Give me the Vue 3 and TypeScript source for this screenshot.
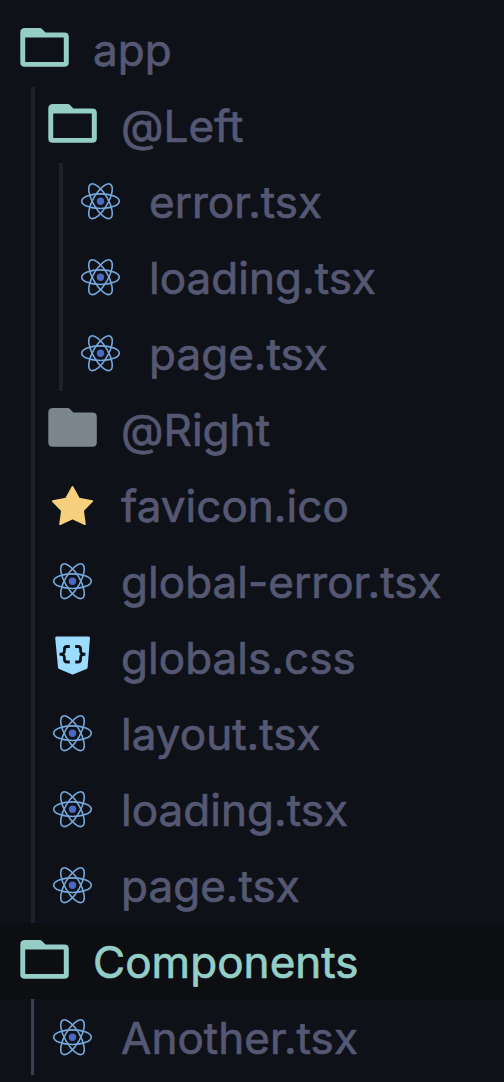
<script setup lang="ts">
import { defineComponent, h, type PropType, type VNode } from 'vue'

type IconKind = 'open' | 'folder' | 'react' | 'star' | 'css'

interface TreeNode {
  name: string
  icon: IconKind
  active?: boolean
  children?: TreeNode[]
}

const tree: TreeNode[] = [
  {
    name: 'app',
    icon: 'open',
    children: [
      {
        name: '@Left',
        icon: 'open',
        children: [
          { name: 'error.tsx', icon: 'react' },
          { name: 'loading.tsx', icon: 'react' },
          { name: 'page.tsx', icon: 'react' },
        ],
      },
      { name: '@Right', icon: 'folder' },
      { name: 'favicon.ico', icon: 'star' },
      { name: 'global-error.tsx', icon: 'react' },
      { name: 'globals.css', icon: 'css' },
      { name: 'layout.tsx', icon: 'react' },
      { name: 'loading.tsx', icon: 'react' },
      { name: 'page.tsx', icon: 'react' },
    ],
  },
  {
    name: 'Components',
    icon: 'open',
    active: true,
    children: [{ name: 'Another.tsx', icon: 'react' }],
  },
]

const folderOutline =
  'M5 17H19.8Q21 17 22 18L25.4 21.6H44.2Q48.8 21.6 48.8 26V51.4Q48.8 55.8 44.2 55.8H5Q.3 55.8 .3 51.4V21.6Q.3 17 5 17Z'

const shapes: Record<IconKind, () => VNode[]> = {
  open: () => [
    h('path', {
      class: 'teal',
      'fill-rule': 'evenodd',
      d: `${folderOutline}M5.2 26.4V50.9H43.8V26.4Z`,
    }),
  ],
  folder: () => [h('path', { class: 'gray', d: folderOutline })],
  react: () => [
    h('g', { class: 'orbit' }, [
      h('ellipse', { cx: 24.5, cy: 38.2, rx: 18.8, ry: 7.3 }),
      h('ellipse', { cx: 24.5, cy: 38.2, rx: 19.6, ry: 7.5, transform: 'rotate(60 24.5 38.2)' }),
      h('ellipse', { cx: 24.5, cy: 38.2, rx: 19.6, ry: 7.5, transform: 'rotate(120 24.5 38.2)' }),
    ]),
    h('circle', { class: 'nucleus', cx: 24.5, cy: 38.2, r: 3.7 }),
  ],
  star: () => [
    h('path', {
      class: 'gold',
      d: 'M24.5 20L31 31.6L44.2 34.1L35 43.6L36.9 57.2L24.5 51.4L12.1 57.2L14 43.6L4.8 34.1L18 31.6Z',
    }),
  ],
  css: () => [
    h('path', {
      class: 'sky',
      d: 'M8.6 17.5H40.6Q42.1 17.5 42 19L39.6 48.5Q39.5 49.6 38.4 50.1L25.6 55.3Q24.6 55.7 23.6 55.3L11.2 50.1Q10.1 49.6 10 48.5L7.2 19Q7.1 17.5 8.6 17.5Z',
    }),
    h('path', {
      class: 'brace',
      d: 'M21.8 27.5H19.3Q16.4 27.5 16.4 30.3V31.9Q16.4 35.2 11.5 35.2Q16.4 35.2 16.4 38.5V40.2Q16.4 43 19.3 43H21.8M27.2 27.5H29.7Q32.6 27.5 32.6 30.3V31.9Q32.6 35.2 37.5 35.2Q32.6 35.2 32.6 38.5V40.2Q32.6 43 29.7 43H27.2',
    }),
  ],
}

const TreeList = defineComponent({
  name: 'TreeList',
  props: { nodes: { type: Array as PropType<TreeNode[]>, required: true } },
  setup(props) {
    return (): VNode =>
      h(
        'ul',
        { class: 'tree-list' },
        props.nodes.map((node) =>
          h('li', { class: { 'current-branch': node.active } }, [
            h('div', { class: ['tree-row', { active: node.active }] }, [
              h('svg', { class: 'tree-icon', viewBox: '0 0 49 76', 'aria-hidden': 'true' }, shapes[node.icon]()),
              h('span', { class: 'tree-name' }, node.name),
            ]),
            node.children ? h(TreeList, { nodes: node.children }) : null,
          ]),
        ),
      )
  },
})
</script>

<template>
  <nav class="explorer" aria-label="Files">
    <TreeList :nodes="tree" />
  </nav>
</template>

<style>
body {
  background: #0e1118;
}
</style>

<style scoped>
.explorer {
  box-sizing: border-box;
  height: 1082px;
  padding-top: 11px;
  overflow: hidden;
  background: #0e1118;
  color: #555872;
  font-family: Inter, 'Liberation Sans', sans-serif;
  font-size: 44px;
}

.explorer :deep(.tree-list) {
  list-style: none;
  margin: 0;
  padding: 0;
}

.explorer :deep(.tree-list .tree-list) {
  margin-left: 31px;
  border-left: 4px solid #1e202a;
}

.explorer :deep(.tree-list .tree-list .tree-list) {
  margin-left: 24px;
}

.explorer :deep(.current-branch .tree-list) {
  border-left: 3px solid #3e3f52;
}

.explorer :deep(.tree-row) {
  display: flex;
  align-items: center;
  gap: 24px;
  height: 76px;
  padding-left: 20px;
}

.explorer :deep(.tree-list .tree-list .tree-row) {
  padding-left: 13px;
}

.explorer :deep(.current-branch .tree-list .tree-row) {
  padding-left: 14px;
}

.explorer :deep(.tree-row.active) {
  background: #0d0e12;
  color: #94cec6;
}

.explorer :deep(.tree-icon) {
  flex: none;
  width: 49px;
  height: 76px;
}

.explorer :deep(.tree-name) {
  padding-top: 2px;
  line-height: 76px;
  letter-spacing: 0.04px;
  white-space: nowrap;
  -webkit-text-stroke: 0.7px currentColor;
}

.explorer :deep(.teal) {
  fill: #94cec6;
}

.explorer :deep(.gray) {
  fill: #7b878d;
}

.explorer :deep(.orbit) {
  fill: none;
  stroke: #74a8dc;
  stroke-width: 1.6;
}

.explorer :deep(.nucleus) {
  fill: #4a69c2;
}

.explorer :deep(.gold) {
  fill: #f8cf7c;
  stroke: #f8cf7c;
  stroke-width: 1.8;
  stroke-linejoin: round;
}

.explorer :deep(.sky) {
  fill: #9bdcff;
}

.explorer :deep(.brace) {
  fill: none;
  stroke: #0e1118;
  stroke-width: 2.8;
}
</style>
